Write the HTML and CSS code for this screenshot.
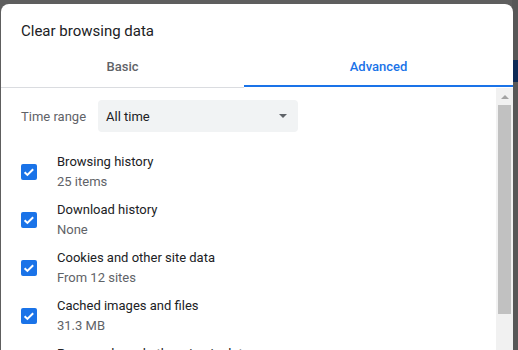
FILE: index.html
```html
<!DOCTYPE html>
<html lang="en">
<head>
    <meta charset="UTF-8">
    <meta name="viewport" content="width=device-width, initial-scale=1.0">
    <title>Clear browsing data</title>
    <link rel="stylesheet" href="styles.css">
</head>
<body>
    <div class="dialog">
        <h1 class="title">Clear browsing data</h1>
        <div class="tabs">
            <div class="tab basic">Basic</div>
            <div class="tab active">Advanced</div>
        </div>
        <div class="body">
            <div class="content">
                <div class="range">
                    <span class="range-label">Time range</span>
                    <div class="select">
                        <span>All time</span>
                        <svg class="arrow" width="8" height="4" viewBox="0 0 8 4"><path d="M0 0 L8 0 L4 4 Z" fill="#5f6368"/></svg>
                    </div>
                </div>
                <div class="item">
                    <div class="check"><svg width="16" height="16" viewBox="0 0 16 16"><path d="M3.6 8.2 L6.4 10.9 L12.2 5.2" fill="none" stroke="#fff" stroke-width="2"/></svg></div>
                    <div class="text">
                        <div class="label">Browsing history</div>
                        <div class="sub">25 items</div>
                    </div>
                </div>
                <div class="item">
                    <div class="check"><svg width="16" height="16" viewBox="0 0 16 16"><path d="M3.6 8.2 L6.4 10.9 L12.2 5.2" fill="none" stroke="#fff" stroke-width="2"/></svg></div>
                    <div class="text">
                        <div class="label">Download history</div>
                        <div class="sub">None</div>
                    </div>
                </div>
                <div class="item">
                    <div class="check"><svg width="16" height="16" viewBox="0 0 16 16"><path d="M3.6 8.2 L6.4 10.9 L12.2 5.2" fill="none" stroke="#fff" stroke-width="2"/></svg></div>
                    <div class="text">
                        <div class="label">Cookies and other site data</div>
                        <div class="sub">From 12 sites</div>
                    </div>
                </div>
                <div class="item">
                    <div class="check"><svg width="16" height="16" viewBox="0 0 16 16"><path d="M3.6 8.2 L6.4 10.9 L12.2 5.2" fill="none" stroke="#fff" stroke-width="2"/></svg></div>
                    <div class="text">
                        <div class="label">Cached images and files</div>
                        <div class="sub">31.3 MB</div>
                    </div>
                </div>
                <div class="item">
                    <div class="check"><svg width="16" height="16" viewBox="0 0 16 16"><path d="M3.6 8.2 L6.4 10.9 L12.2 5.2" fill="none" stroke="#fff" stroke-width="2"/></svg></div>
                    <div class="text">
                        <div class="label">Passwords and other sign-in data</div>
                        <div class="sub">None</div>
                    </div>
                </div>
            </div>
            <div class="scrollbar">
                <div class="scroll-up"><svg width="8" height="4" viewBox="0 0 8 4"><path d="M0 4 L4 0 L8 4 Z" fill="#a3a3a3"/></svg></div>
                <div class="thumb"></div>
            </div>
        </div>
    </div>
</body>
</html>
```

FILE: styles.css
```css
body {
    margin: 0;
    height: 350px;
    overflow: hidden;
    font-family: Roboto, 'Liberation Sans', sans-serif;
    font-size: 13px;
    background: linear-gradient(#575757 60px, #0e2a56 60px, #0e2a56 82px, #575757 82px) right / 6px 100% no-repeat, #5e5e5e;
}
.dialog {
    margin: 4px 0 0 1px;
    width: 512px;
    height: 360px;
    background: white;
    border-radius: 8px 8px 0 0;
    display: flex;
    flex-direction: column;
}
.title {
    margin: 0;
    padding: 17px 20px 0;
    font-size: 15px;
    font-weight: 400;
    line-height: 20px;
    color: #202124;
}
.tabs {
    display: flex;
}
.tab {
    padding: 16px 0 10px;
    line-height: 20px;
    font-weight: 500;
    text-align: center;
    color: #5f6368;
    border-bottom: 1px solid #dadce0;
}
.tab.basic {
    width: 243px;
}
.tab.active {
    flex: 1;
    color: #1a73e8;
    border-bottom-color: transparent;
    box-shadow: inset 0 -2px 0 #1a73e8;
}
.body {
    flex: 1;
    display: flex;
    overflow: hidden;
}
.content {
    flex: 1;
    padding: 12px 0 0 20px;
}
.range {
    display: flex;
    align-items: center;
    margin-bottom: 20px;
}
.range-label {
    width: 77px;
    color: #5f6368;
}
.select {
    width: 200px;
    height: 32px;
    box-sizing: border-box;
    padding: 0 11px 0 8px;
    background: #f1f3f4;
    border-radius: 4px;
    display: flex;
    align-items: center;
    justify-content: space-between;
    color: #202124;
}
.item {
    display: flex;
    align-items: center;
    margin-bottom: 8px;
}
.check {
    width: 16px;
    height: 16px;
    border-radius: 2px;
    background: #1a73e8;
    margin: 0 20px 0 0;
    display: flex;
}
.text {
    line-height: 20px;
}
.label {
    color: #202124;
}
.sub {
    color: #5f6368;
}
.scrollbar {
    width: 17px;
    background: #f1f1f1;
    display: flex;
    flex-direction: column;
    align-items: center;
}
.scroll-up {
    height: 17px;
    display: flex;
    align-items: center;
    justify-content: center;
}
.thumb {
    width: 13px;
    height: 209px;
    background: #c1c1c1;
}
```
